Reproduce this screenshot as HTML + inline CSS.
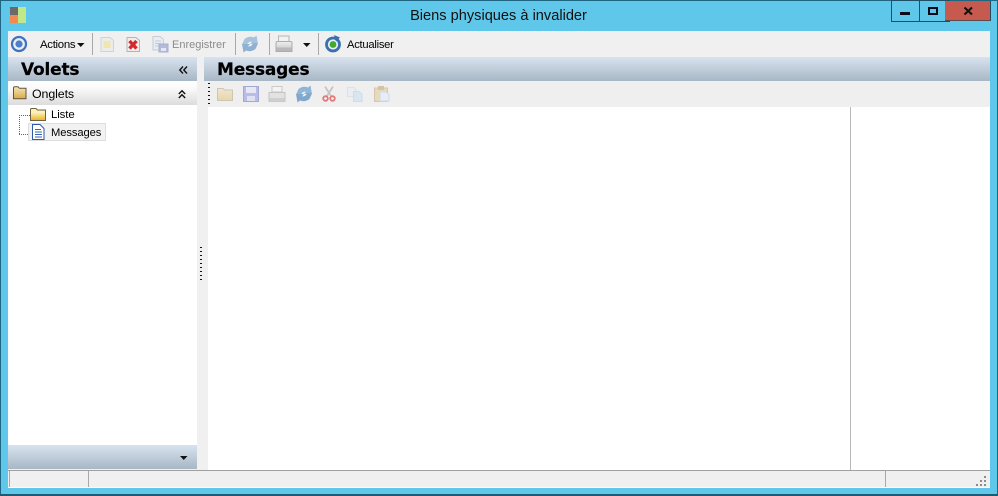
<!DOCTYPE html>
<html><head><meta charset="utf-8"><style>
html,body{margin:0;padding:0;width:998px;height:496px;overflow:hidden;background:#5fc8ea;font-family:"Liberation Sans",sans-serif;}
.a{position:absolute;}
.t{position:absolute;white-space:nowrap;font-size:11px;line-height:14px;color:#000;}
svg{position:absolute;overflow:visible;}
svg.i{filter:blur(.3px);}
.sep{position:absolute;width:1px;background:#a8a8a8;top:33px;height:22px;}
.hd{position:absolute;background:linear-gradient(#d8e3ef,#a8b7c5);}
.h{position:absolute;white-space:nowrap;font-family:"DejaVu Sans",sans-serif;font-weight:bold;font-size:17px;letter-spacing:-.2px;-webkit-text-stroke:.2px #000;line-height:24px;color:#000;}
</style></head><body>
<svg width="0" height="0" style="position:absolute"><defs>
<linearGradient id="gf" x1="0" y1="0" x2="0" y2="1"><stop offset="0" stop-color="#f6e6b4"/><stop offset="1" stop-color="#d9a94a"/></linearGradient>
<linearGradient id="gy" x1="0" y1="0" x2="0" y2="1"><stop offset="0" stop-color="#fbeeb0"/><stop offset="1" stop-color="#eab52e"/></linearGradient>
<linearGradient id="gp" x1="0" y1="0" x2="0" y2="1"><stop offset="0" stop-color="#f0e6cf"/><stop offset="1" stop-color="#e6d5ac"/></linearGradient>
<linearGradient id="gr" x1="0" y1="0" x2="0" y2="1"><stop offset="0" stop-color="#eeeeee"/><stop offset="1" stop-color="#c4c4c4"/></linearGradient>
</defs></svg>
<div class="a" style="left:0;top:0;width:996px;height:494px;border:1px solid #1e6682;background:#5fc8ea"></div>
<div class="a" style="left:0;top:494px;width:998px;height:2px;background:#1e5a72"></div>
<div class="a" style="left:10px;top:7px;width:8px;height:8px;background:#6a6a6a"></div>
<div class="a" style="left:10px;top:15px;width:8px;height:8px;background:#f08a50"></div>
<div class="a" style="left:18px;top:7px;width:8px;height:16px;background:#bfe88a"></div>
<div class="t" style="left:0;top:7px;width:997px;text-align:center;font-size:14.6px;line-height:18px;color:#111">Biens physiques à invalider</div>
<div class="a" style="left:891px;top:0;width:57px;height:20px;background:#5fc8ea;border:1px solid #1e4f66"></div>
<div class="a" style="left:919px;top:0;width:1px;height:21px;background:#1e4f66"></div>
<div class="a" style="left:945px;top:1px;width:46px;height:20px;background:#c75a4e;border-right:1px solid #1e4f66;border-bottom:1px solid #5a4a4a;box-sizing:border-box"></div>
<div class="a" style="left:900px;top:12px;width:10px;height:3px;background:#0a0a1a"></div>
<div class="a" style="left:928px;top:7px;width:6px;height:4px;border:2px solid #0a0a1a"></div>
<svg style="left:964px;top:7px" width="9" height="8"><path d="M.5 0.5L8 7.5M8 0.5L.5 7.5" stroke="#111" stroke-width="2"/></svg>
<div class="a" style="left:8px;top:31px;width:982px;height:26px;background:#f0f0f0"></div>
<div class="a" style="left:8px;top:57px;width:982px;height:413px;background:#f0f0f0"></div>
<svg class="i" style="left:10px;top:35px" width="18" height="18"><circle cx="9" cy="9" r="7" fill="#e8eef8" stroke="#3f72b8" stroke-width="2.2"/><circle cx="9" cy="9" r="3.6" fill="#4d7fc8"/></svg>
<div class="t" style="left:40px;top:38px;font-size:11.4px;letter-spacing:-.3px">Actions</div>
<svg style="left:77px;top:43px" width="8" height="4"><path d="M0 0H7.5L3.75 4Z" fill="#111"/></svg>
<div class="sep" style="left:92px"></div>
<svg class="i" style="left:100px;top:37px" width="14" height="15"><path d="M1 .5H10L13.5 3.5V14.5H1Z" fill="#ececea" stroke="#cfd3d6"/><rect x="3.5" y="4" width="7" height="7" fill="#efe6b0"/></svg>
<svg class="i" style="left:126px;top:37px" width="14" height="15"><path d="M1 .5H10L13.5 3.5V14.5H1Z" fill="#eeeeee" stroke="#b0b4bc"/><path d="M3.5 4L10.5 11.5M10.5 4L3.5 11.5" stroke="#d8282c" stroke-width="3.4"/></svg>
<svg class="i" style="left:152px;top:36px" width="17" height="17"><path d="M1 .5H8L11.5 3.5V14H1Z" fill="#e9edf3" stroke="#c5cdd8"/><path d="M3 5H9M3 7.5H9M3 10H7" stroke="#c3ccd8"/><rect x="7" y="8" width="9" height="8" fill="#b4badb" stroke="#a8b0d0"/><rect x="9" y="12" width="5" height="3" fill="#e5e8f2"/></svg>
<div class="t" style="left:172px;top:38px;color:#8b8b8b;font-size:11px">Enregistrer</div>
<div class="sep" style="left:235px"></div>
<svg class="i" style="left:241px;top:35px" width="18" height="18"><path d="M1 9.5L3.5 4Q8 .5 13 2.5L15.5 .5L17 9H9L11 6.8Q8.5 6 7 8L5.5 10Z" fill="#a5c3dc"/><path d="M17 8.5L14.5 14Q10 17.5 5 15.5L2.5 17.5L1 9H9L7 11.2Q9.5 12 11 10L12.5 8Z" fill="#8fb2d2"/></svg>
<div class="sep" style="left:269px"></div>
<svg class="i" style="left:275px;top:35px" width="18" height="18"><path d="M3.5 1H14V8H3.5Z" fill="#f2f2f2" stroke="#b4b4b4"/><path d="M1 8Q1 6.5 2.5 6.5H15.5Q17 6.5 17 8V16.5H1Z" fill="url(#gr)" stroke="#adadad"/><rect x="1.5" y="12.5" width="15" height="3.5" fill="#b8b8b8"/></svg>
<svg style="left:303px;top:43px" width="8" height="4"><path d="M0 0H7.5L3.75 4Z" fill="#111"/></svg>
<div class="sep" style="left:318px"></div>
<svg class="i" style="left:324px;top:35px" width="18" height="18"><circle cx="9" cy="9.5" r="6.5" fill="#e8f0f8" stroke="#3a6fb0" stroke-width="2.8"/><circle cx="9" cy="9.5" r="3.4" fill="#43a82c"/><path d="M10 0L16 2.5L12 6.5Z" fill="#3a6fb0"/></svg>
<div class="t" style="left:347px;top:38px;font-size:11.2px;letter-spacing:-.25px">Actualiser</div>
<div class="hd" style="left:8px;top:57px;width:189px;height:24px"></div>
<div class="h" style="left:21px;top:58px">Volets</div>
<svg style="left:179px;top:66px" width="9" height="8"><path d="M4 .5L.8 4L4 7.5M8 .5L4.8 4L8 7.5" fill="none" stroke="#111" stroke-width="1.4"/></svg>
<div class="a" style="left:8px;top:81px;width:189px;height:24px;background:linear-gradient(#fff,#fafafa 30%,#dcdcdc)"></div>
<svg class="i" style="left:13px;top:86px" width="14" height="13"><path d="M.5 2Q.5 .8 2 .8H5L6.5 2.3H13V12.7H.5Z" fill="url(#gf)" stroke="#5e5644"/></svg>
<div class="t" style="left:32px;top:87px;font-size:12.4px;letter-spacing:-.1px">Onglets</div>
<svg style="left:178px;top:90px" width="9" height="9"><path d="M.8 4L4 .8L7.2 4M.8 8L4 4.8L7.2 8" fill="none" stroke="#111" stroke-width="1.4"/></svg>
<div class="a" style="left:8px;top:105px;width:189px;height:340px;background:#fff"></div>
<svg style="left:19px;top:115px" width="12" height="20"><path d="M.5 0V19M0 .5H11M0 19.5H11" fill="none" stroke="#666" stroke-dasharray="1 1"/></svg>
<svg class="i" style="left:30px;top:108px" width="16" height="13"><path d="M.5 1.5Q.5 .5 1.5 .5H6L7.5 2H15.5V12.5H.5Z" fill="#fbf0bc" stroke="#6e6240"/><path d="M1 5H15V12H1Z" fill="url(#gy)"/></svg>
<div class="t" style="left:51px;top:108px;font-size:11.4px;letter-spacing:-.1px">Liste</div>
<div class="a" style="left:28px;top:123px;width:76px;height:16px;background:#f2f2f2;border:1px solid #dedede"></div>
<svg class="i" style="left:32px;top:124px" width="13" height="16"><path d="M.5 .5H8L12 4.5V15.5H.5Z" fill="#fff" stroke="#2f5aa8"/><path d="M3 5.5H9M3 8H10M3 10.5H10M3 13H10" stroke="#3a66b8"/></svg>
<div class="t" style="left:51px;top:126px;font-size:11.2px;letter-spacing:-.1px">Messages</div>
<div class="hd" style="left:8px;top:445px;width:189px;height:24px"></div>
<svg style="left:180px;top:456px" width="8" height="4"><path d="M0 0H7.5L3.75 4Z" fill="#111"/></svg>
<div class="a" style="left:200px;top:247px;width:2px;height:34px;background:repeating-linear-gradient(#111 0 1px,transparent 1px 4px)"></div>
<div class="hd" style="left:204px;top:57px;width:786px;height:24px"></div>
<div class="h" style="left:217px;top:58px">Messages</div>
<div class="a" style="left:208px;top:81px;width:782px;height:26px;background:#f0eff0"></div>
<div class="a" style="left:208px;top:83px;width:2px;height:24px;background:repeating-linear-gradient(#111 0 1px,transparent 1px 4px)"></div>
<svg class="i" style="left:217px;top:87px" width="16" height="14"><path d="M.5 1.5H6L7.5 3H15.5V13.5H.5Z" fill="url(#gp)" stroke="#cfc6b2"/></svg>
<svg class="i" style="left:243px;top:86px" width="16" height="16"><path d="M.5 .5H15.5V15.5H.5Z" fill="#b8bce6" stroke="#a4a9d4"/><rect x="3" y="1" width="10" height="6" fill="#e8e8f5"/><rect x="4" y="10" width="8" height="5" fill="#dfe1f2"/></svg>
<svg class="i" style="left:268px;top:86px" width="18" height="16"><path d="M4 .5H14V6H4Z" fill="#f4f4f4" stroke="#c9c9c9"/><path d="M1 6.5H17V15.5H1Z" fill="#e2e2e2" stroke="#c4c4c4"/><rect x="1.5" y="12" width="15" height="3.5" fill="#cfcfcf"/></svg>
<svg class="i" style="left:295px;top:85px" width="18" height="18"><path d="M1 9.5L3.5 4Q8 .5 13 2.5L15.5 .5L17 9H9L11 6.8Q8.5 6 7 8L5.5 10Z" fill="#8fb6d8"/><path d="M17 8.5L14.5 14Q10 17.5 5 15.5L2.5 17.5L1 9H9L7 11.2Q9.5 12 11 10L12.5 8Z" fill="#7fa8cc"/></svg>
<svg class="i" style="left:322px;top:86px" width="14" height="16"><path d="M3 .5L9 10M11 .5L5 10" stroke="#c8c4c4" stroke-width="1.8"/><circle cx="3.5" cy="12.5" r="2.3" fill="none" stroke="#e07a7a" stroke-width="1.8"/><circle cx="10.5" cy="12.5" r="2.3" fill="none" stroke="#e07a7a" stroke-width="1.8"/></svg>
<svg class="i" style="left:347px;top:86px" width="16" height="16"><path d="M.5 1.5H7L9 3.5V10.5H.5Z" fill="#eaedf1" stroke="#dde1e6"/><path d="M6.5 5.5H12L15 8V15.5H6.5Z" fill="#d8e6f2" stroke="#cfdbe6"/></svg>
<svg class="i" style="left:374px;top:85px" width="16" height="17"><path d="M.5 3H13.5V16.5H.5Z" fill="#e8d9bc" stroke="#d6c7aa"/><rect x="4" y="1" width="6" height="4" fill="#d0c4aa"/><path d="M6 7H12L15 9.5V16H6Z" fill="#e6eef6" stroke="#d0dbe6"/></svg>
<div class="a" style="left:208px;top:107px;width:782px;height:363px;background:#fff"></div>
<div class="a" style="left:850px;top:107px;width:1px;height:363px;background:#b8b8b8"></div>
<div class="a" style="left:8px;top:470px;width:982px;height:18px;background:#f0f0f0"></div>
<div class="a" style="left:8px;top:470px;width:982px;height:1px;background:#a0a0a0"></div>
<div class="a" style="left:8px;top:487px;width:982px;height:1px;background:#fbfbfb"></div>
<div class="a" style="left:9px;top:471px;width:1px;height:16px;background:#a8a8a8"></div>
<div class="a" style="left:88px;top:471px;width:1px;height:16px;background:#a8a8a8"></div>
<div class="a" style="left:885px;top:471px;width:1px;height:16px;background:#a8a8a8"></div>
<svg style="left:975px;top:476px" width="12" height="10" fill="#8c8c8c"><rect x="9" y="0" width="2" height="2"/><rect x="5" y="4" width="2" height="2"/><rect x="9" y="4" width="2" height="2"/><rect x="1" y="8" width="2" height="2"/><rect x="5" y="8" width="2" height="2"/><rect x="9" y="8" width="2" height="2"/></svg>
</body></html>
